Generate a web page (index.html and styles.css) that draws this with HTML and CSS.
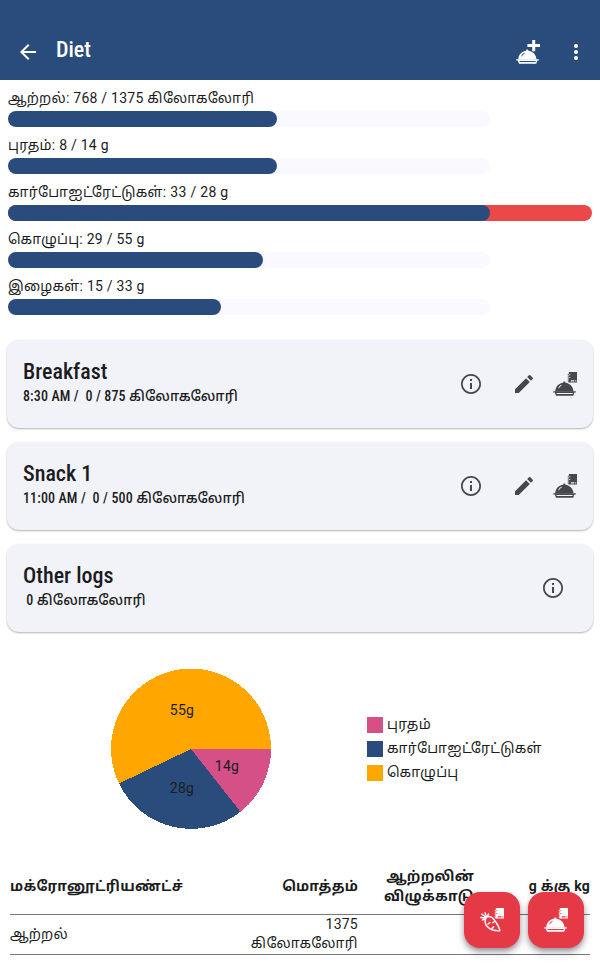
FILE: index.html
```html
<!DOCTYPE html>
<html lang="ta">
<head>
<meta charset="utf-8">
<title>Diet</title>
<link rel="stylesheet" href="styles.css">
</head>
<body>
<svg class="defs" width="0" height="0">
  <symbol id="info" viewBox="0 0 24 24"><path d="M11 7h2v2h-2zm0 4h2v6h-2zm1-9C6.480 2 2 6.480 2 12s4.480 10 10 10 10-4.480 10-10S17.520 2 12 2zm0 18.300a8.300 8.300 0 1 1 0-16.600 8.300 8.300 0 0 1 0 16.600z"/></symbol>
  <symbol id="edit" viewBox="0 0 24 24"><path d="M3 17.250V21h3.750L17.810 9.940l-3.750-3.750L3 17.250zM20.710 7.040a1 1 0 0 0 0-1.410l-2.340-2.340a1 1 0 0 0-1.410 0l-1.830 1.830 3.750 3.750 1.830-1.830z"/></symbol>
  <symbol id="cloche" viewBox="0 0 24 24">
    <path fill-rule="evenodd" d="M2.200 19.500C2.500 14.800 5.500 11.400 10.200 10.800C9.900 9.200 12.700 9.200 12.400 10.800C17 11.400 20.200 14.800 20.500 19.500zM5.200 16.200l.7.300C6.500 15.100 7.500 14.100 8.800 13.500l-.3-.7C7 13.500 5.900 14.600 5.200 16.200z"/>
    <path fill-rule="evenodd" d="M.2 19.200h22.600v1.300h-1.500l-1 3.200H3l-1.200-3.200H.2zM3.400 21l.4 1.100h15.600l.4-1.100z"/>
  </symbol>
  <symbol id="book" viewBox="0 0 10 11"><path fill-rule="evenodd" d="M1.500 0H9.700V10.600H1.200V9.600H.3V8.600H1.500V7.600H.3V6.600H1.500V5.500H.3V4.500H1.500V3.300H.3V2.300H1.500zM3.500 8.200V9.600H7V8.200zM8 8.200V9.600H9V8.200zM2 2.300V3.200H3V2.300zM2 5V5.900H3V5z"/></symbol>
</svg>
<header class="appbar">
  <svg class="back" viewBox="0 0 24 24"><path d="M20 11H7.830l5.590-5.590L12 4l-8 8 8 8 1.410-1.410L7.830 13H20z"/></svg>
  <h1>Diet</h1>
  <svg class="add" viewBox="0 0 24 24"><use href="#cloche"/><path d="M16.200 0h3v4H24v3h-4.800v4.300h-3V7h-4.800V4h4.800z"/></svg>
  <svg class="more" viewBox="0 0 24 24"><circle cx="12" cy="6" r="2"/><circle cx="12" cy="12" r="2"/><circle cx="12" cy="18" r="2"/></svg>
</header>
<main>
  <section class="goals">
    <div class="goal"><p>ஆற்றல்: 768 / 1375 <span class="unit">கிலோகலோரி</span></p><div class="track"><div class="fill" style="width:269px"></div></div></div>
    <div class="goal"><p>புரதம்: 8 / 14 g</p><div class="track"><div class="fill" style="width:269px"></div></div></div>
    <div class="goal"><p class="wide">கார்போஐட்ரேட்டுகள்: 33 / 28 g</p><div class="track over"><div class="fill" style="width:482px"></div></div></div>
    <div class="goal"><p>கொழுப்பு: 29 / 55 g</p><div class="track"><div class="fill" style="width:255px"></div></div></div>
    <div class="goal"><p>இழைகள்: 15 / 33 g</p><div class="track"><div class="fill" style="width:213px"></div></div></div>
  </section>
  <section class="meals">
    <article class="card"><div class="label"><h2>Breakfast</h2><p>8:30 AM /&nbsp; 0 / 875 <span class="unit">கிலோகலோரி</span></p></div><svg class="i"><use href="#info"/></svg><svg class="i pen"><use href="#edit"/></svg><svg class="i log" viewBox="0 0 24 24"><use href="#cloche"/><use href="#book" x="14.300" y="0" width="10" height="11"/></svg></article>
    <article class="card"><div class="label"><h2>Snack 1</h2><p>11:00 AM /&nbsp; 0 / 500 <span class="unit">கிலோகலோரி</span></p></div><svg class="i"><use href="#info"/></svg><svg class="i pen"><use href="#edit"/></svg><svg class="i log" viewBox="0 0 24 24"><use href="#cloche"/><use href="#book" x="14.300" y="0" width="10" height="11"/></svg></article>
    <article class="card last"><div class="label"><h2>Other logs</h2><p>&nbsp;0 <span class="unit">கிலோகலோரி</span></p></div><svg class="i"><use href="#info"/></svg></article>
  </section>
  <section class="chart">
    <svg class="pie" viewBox="-80 -80 160 160" shape-rendering="crispEdges">
      <path fill="#ffa600" d="M0 0L-72 34.500A80 80 0 1 1 80 0z"/>
      <path fill="#d45087" d="M0 0H80A80 80 0 0 1 49.500 62.800z"/>
      <path fill="#2a4c7d" d="M0 0L49.500 62.800A80 80 0 0 1-72 34.500z"/>
      <text x="-9" y="-34">55g</text><text x="36" y="22">14g</text><text x="-9" y="44">28g</text>
    </svg>
    <ul class="legend"><li class="protein">புரதம்</li><li class="carbs">கார்போஐட்ரேட்டுகள்</li><li class="fat">கொழுப்பு</li></ul>
  </section>
  <table>
    <colgroup><col class="c1"><col class="c2"><col class="c3"><col class="c4"></colgroup>
    <tr><th>மக்ரோனூட்ரியண்ட்ச்</th><th>மொத்தம்</th><th>ஆற்றலின் விழுக்காடு</th><th>g க்கு kg</th></tr>
    <tr><td>ஆற்றல்</td><td>1375 <span class="unit">கிலோகலோரி</span></td><td></td><td></td></tr>
  </table>
</main>
<div class="fabs">
  <button><svg viewBox="0 0 24 24"><g fill="none" stroke="currentColor" stroke-width="1.400" stroke-linecap="round" stroke-linejoin="round"><path d="M5.500 11C6.500 7.500 11.500 7.800 14 11.500C17 15.500 19.500 19 19.800 22.800C15.500 23 10 21.500 7.200 18.500C5 16.200 4.600 14 5.500 11zM8 16l2-1.500M12 20.500l1.500-1.700M14.500 13.500l-1.700 1.200M6 10L.8 9.500M6 9.500L1.800 6M6.500 9L5 4.800M7 9L8.500 6M5.500 10.500L2.500 12"/></g><use href="#book" x="14.300" y="0" width="10" height="11"/></svg></button>
  <button><svg viewBox="0 0 24 24"><use href="#cloche"/><use href="#book" x="14.300" y="0" width="10" height="11"/></svg></button>
</div>
</body>
</html>
```
FILE: styles.css
```css
* { box-sizing: border-box; }
body { margin: 0; height: 964px; overflow: hidden; background: #fff; color: #1a1c20; font: 400 14px/20px Roboto, "Noto Sans Tamil", "Noto Sans", sans-serif; letter-spacing: .25px; }
h1, h2, p, ul { margin: 0; padding: 0; }
svg { fill: currentColor; flex: none; }
.defs { position: absolute; }
.unit { letter-spacing: .5px; }
.appbar { height: 80px; padding: 24px 12px 0 16px; display: flex; align-items: center; background: #2a4c7d; color: #fff; }
.appbar svg { width: 24px; height: 24px; }
h1, h2 { font: 500 22px/28px "Roboto Condensed", Roboto, sans-serif; font-stretch: 75%; letter-spacing: 0; }
h1 { flex: 1; margin: -5px 0 0 16px; }
.add { margin-right: 24px; }
.goals { padding: 8px 8px 0; }
.goal { height: 47px; }
.goal p { height: 23px; font-size: 14px; white-space: nowrap; }
.goal .wide { letter-spacing: .3px; }
.track { width: 481.5px; height: 16px; border-radius: 8px; background: #f9f9ff; }
.track.over { width: 584px; background: #eb4848; }
.fill { height: 16px; border-radius: 8px; background: #2a4c7d; }
.meals { padding: 17px 7px 0; display: flex; flex-direction: column; gap: 14px; }
.card { height: 88px; border-radius: 12px; background: #f2f3f9; box-shadow: 0 1px 2px rgba(0,0,0,.3); padding: 0 16px; display: flex; align-items: center; color: #44474e; }
.label { flex: 1; padding-bottom: 4px; color: #1a1c20; }
.label p { font-family: "Roboto Condensed", Roboto, "Noto Sans Tamil", sans-serif; font-stretch: 75%; font-weight: 500; letter-spacing: .12px; white-space: pre; }
.label .unit { letter-spacing: .2px; }
.i { width: 24px; height: 24px; }
.pen { margin-left: 29px; }
.log { margin-left: 17px; }
.last { padding-right: 28px; }
.chart { height: 233px; display: flex; align-items: center; padding-left: 111px; }
.pie { width: 160px; height: 160px; fill: #1a1c20; }
.pie text { text-anchor: middle; }
.legend { list-style: none; margin: -1px 0 0 96px; font-size: 14px; letter-spacing: .3px; }
.legend li { height: 24px; display: flex; align-items: center; gap: 4px; white-space: nowrap; }
.legend li::before { content: ""; width: 16px; height: 16px; margin-top: 2px; background: #d45087; }
.legend .carbs::before { background: #2a4c7d; }
.legend .fat::before { background: #ffa600; }
table { width: 580px; margin: -9px 10px 0; table-layout: fixed; border-collapse: collapse; }
.c1 { width: 232px; } .c2, .c3, .c4 { width: 116px; }
th, td { padding: 0; text-align: right; border-bottom: 1px solid #74777f; font-weight: 400; line-height: 19px; }
th { height: 58px; padding-top: 3px; font-weight: 700; line-height: 20px; }
td { height: 40px; }
th:first-child, td:first-child { text-align: left; }
th:first-child { letter-spacing: .35px; }
.fabs { position: absolute; right: 16px; top: 892px; display: flex; gap: 8px; }
.fabs button { width: 56px; height: 56px; border: 0; padding: 16px; border-radius: 16px; background: #e63946; color: #fff; box-shadow: 0 3px 5px rgba(0,0,0,.3), 0 5px 10px rgba(0,0,0,.16); }
.fabs svg { width: 24px; height: 24px; display: block; }
```
